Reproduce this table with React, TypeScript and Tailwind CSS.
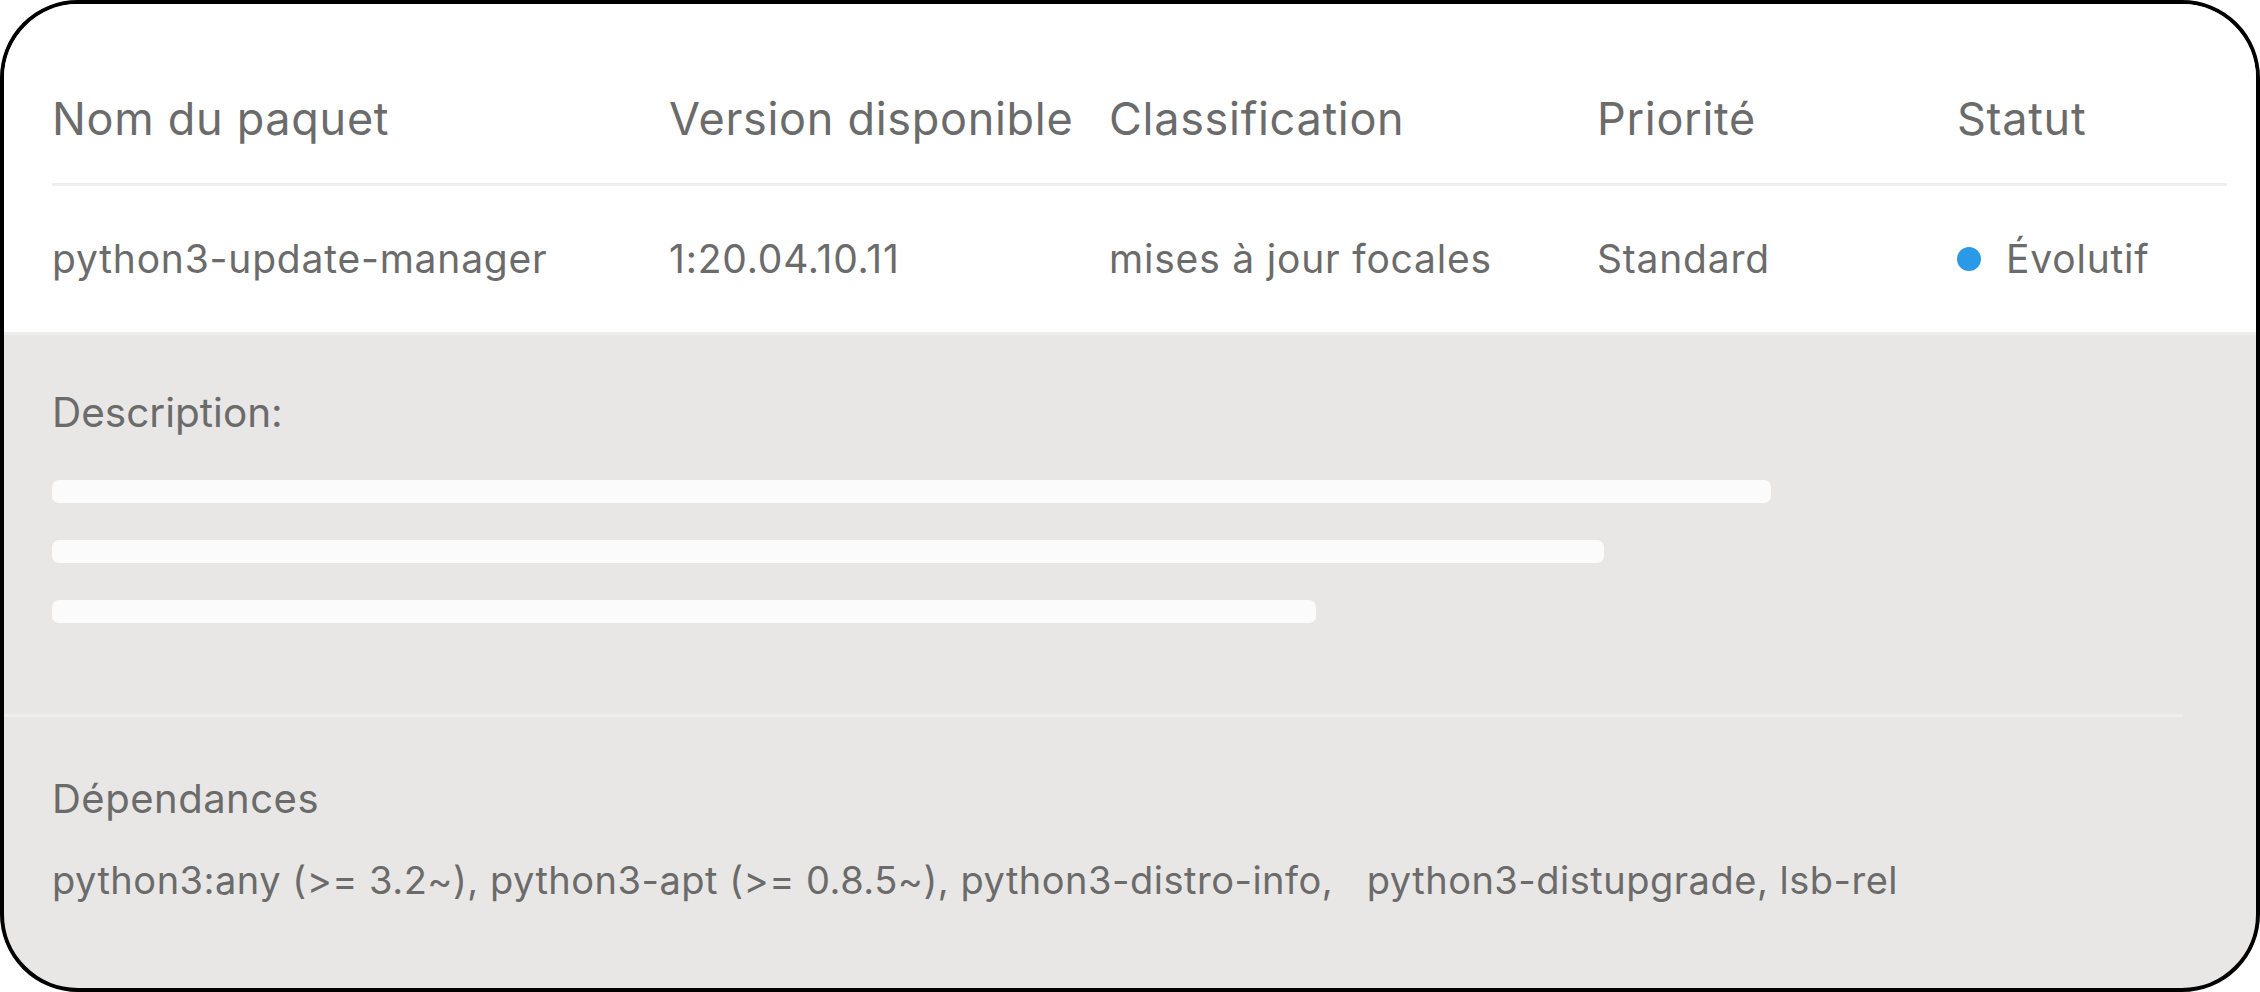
import React from "react";

const headers = ["Nom du paquet", "Version disponible", "Classification", "Priorité", "Statut"];

export default function App() {
  return (
    <div className="w-[2260px] h-[992px] bg-white font-['Inter',sans-serif] text-[#6b6b6b]">
      <div className="w-full h-full border-[4px] border-black rounded-[78px] overflow-hidden flex flex-col bg-[#e8e7e5]">
        {/* Table */}
        <div className="bg-white px-[48px]">
          <div className="grid grid-cols-[617px_440px_488px_360px_1fr] pt-[92px] pb-[42px] border-b-[3px] border-[#efefef] mr-[-19px]">
            {headers.map((h) => (
              <div key={h} className="text-[45px] leading-[45px] tracking-[0.7px] whitespace-nowrap">
                {h}
              </div>
            ))}
          </div>
          <div className="grid grid-cols-[617px_440px_488px_360px_1fr] py-[54px] text-[39px] leading-[38px] tracking-[0.8px] whitespace-nowrap">
            <div>python3-update-manager</div>
            <div>1:20.04.10.11</div>
            <div>mises à jour focales</div>
            <div>Standard</div>
            <div className="flex items-center gap-[25px]">
              <span className="w-[24px] h-[24px] rounded-full bg-[#2b9ae6]" />
              <span>Évolutif</span>
            </div>
          </div>
        </div>

        {/* Details */}
        <div className="border-t-[3px] border-[#ededec] flex-1 flex flex-col">
          <div className="px-[48px] pt-[57px]">
            <div className="text-[40.5px] leading-[42px]">Description:</div>
            <div className="mt-[46px] flex flex-col gap-[37px]">
              <div className="h-[23px] w-[1719px] rounded-[7px] bg-[#fbfbfb]" />
              <div className="h-[23px] w-[1552px] rounded-[7px] bg-[#fbfbfb]" />
              <div className="h-[23px] w-[1264px] rounded-[7px] bg-[#fbfbfb]" />
            </div>
          </div>
          <div className="mt-[91px] h-[3px] w-[2179px] bg-[#efeeed]" />
          <div className="px-[48px] pt-[62px]">
            <div className="text-[40px] leading-[40px] tracking-[0.5px]">Dépendances</div>
            <div className="mt-[43px] text-[38px] leading-[37px] tracking-[0.5px] whitespace-pre">
              {"python3:any (>= 3.2~), python3-apt (>= 0.8.5~), python3-distro-info,   python3-distupgrade, lsb-rel"}
            </div>
          </div>
        </div>
      </div>
    </div>
  );
}
